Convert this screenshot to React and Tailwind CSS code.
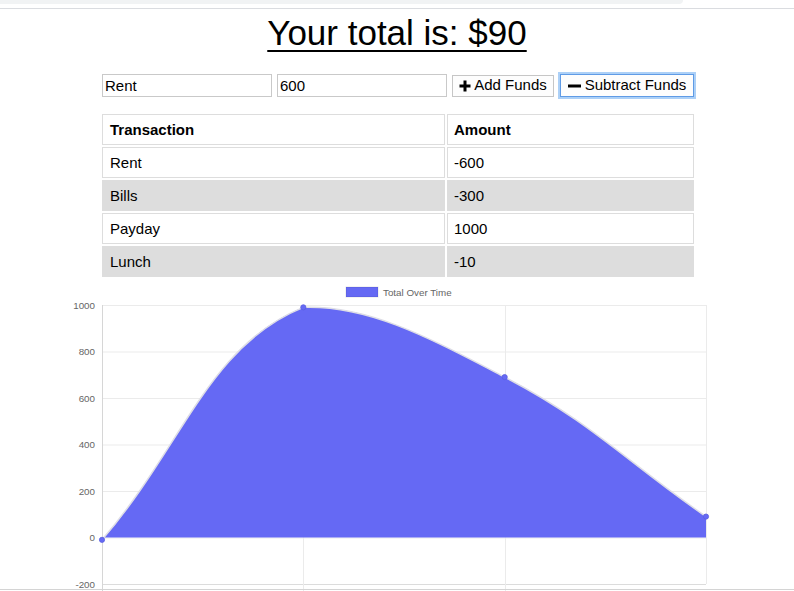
import React from "react";

const transactions = [
  { name: "Rent", amount: "-600" },
  { name: "Bills", amount: "-300" },
  { name: "Payday", amount: "1000" },
  { name: "Lunch", amount: "-10" },
];

// running total, oldest first
const totals = [-10, 990, 690, 90];
const ticks = [1000, 800, 600, 400, 200, 0, -200];

const LEFT = 102;
const RIGHT = 706;
const TOP = 305;
const BOTTOM = 584;
const yOf = (v) => 537.5 - v * 0.2325;
const clamp = (v, a, b) => Math.min(Math.max(v, a), b);

const pts = totals.map((v, i) => [LEFT + (i * (RIGHT - LEFT)) / 3, yOf(v)]);

// same spline chart.js uses (tension 0.4)
const controls = (i) => {
  const prev = pts[Math.max(i - 1, 0)];
  const cur = pts[i];
  const next = pts[Math.min(i + 1, pts.length - 1)];
  const d01 = Math.hypot(cur[0] - prev[0], cur[1] - prev[1]);
  const d12 = Math.hypot(next[0] - cur[0], next[1] - cur[1]);
  const s01 = d01 / (d01 + d12) || 0;
  const s12 = d12 / (d01 + d12) || 0;
  const fa = 0.4 * s01;
  const fb = 0.4 * s12;
  const dx = next[0] - prev[0];
  const dy = next[1] - prev[1];
  return {
    prev: [clamp(cur[0] - fa * dx, LEFT, RIGHT), clamp(cur[1] - fa * dy, TOP, BOTTOM)],
    next: [clamp(cur[0] + fb * dx, LEFT, RIGHT), clamp(cur[1] + fb * dy, TOP, BOTTOM)],
  };
};

let line = `M${pts[0][0]},${pts[0][1]}`;
for (let i = 1; i < pts.length; i++) {
  const a = controls(i - 1).next;
  const b = controls(i).prev;
  line += ` C${a[0]},${a[1]} ${b[0]},${b[1]} ${pts[i][0]},${pts[i][1]}`;
}
const area = `${line} L${RIGHT},${yOf(0)} L${LEFT},${yOf(0)} Z`;

function Plus() {
  return (
    <svg width="12" height="12" viewBox="0 0 12 12">
      <path d="M6 0.5v11M0.5 6h11" stroke="#000" strokeWidth="3" />
    </svg>
  );
}

function Minus() {
  return (
    <svg width="13" height="12" viewBox="0 0 13 12">
      <path d="M0 6h13" stroke="#000" strokeWidth="3" />
    </svg>
  );
}

function Chart() {
  const xs = [LEFT, 303, 505, RIGHT];
  return (
    <svg width="794" height="311" viewBox="0 280 794 311" className="block">
      {/* legend */}
      <rect x="346" y="287" width="32" height="10" fill="#6569f4" stroke="rgba(0,0,0,0.1)" />
      <text x="383" y="295.5" fontSize="9.8" fill="#666" fontFamily="Liberation Sans, Arial, sans-serif">
        Total Over Time
      </text>

      {/* grid */}
      {ticks.map((t) => (
        <g key={t}>
          <line x1={LEFT} x2={RIGHT} y1={yOf(t) + 0.5} y2={yOf(t) + 0.5} stroke={t === -200 ? "#dcdcdc" : "#ebebeb"} />
          <text
            x="95"
            y={yOf(t) + 3.8}
            fontSize="9.8"
            fill="#666"
            textAnchor="end"
            fontFamily="Liberation Sans, Arial, sans-serif"
          >
            {t}
          </text>
        </g>
      ))}
      {xs.map((x, i) => (
        <line
          key={x}
          x1={x + 0.5}
          x2={x + 0.5}
          y1={TOP}
          y2={i === 3 ? BOTTOM : 591}
          stroke={i === 0 ? "#d6d6d6" : "#ebebeb"}
        />
      ))}

      {/* data */}
      <path d={area} fill="#6569f4" />
      <path d={line} fill="none" stroke="#dedee6" strokeWidth="1.5" />
      {pts.map((p, i) => (
        <circle key={i} cx={p[0]} cy={p[1]} r="2.6" fill="#6569f4" stroke="#5a5ee0" strokeWidth="0.8" />
      ))}

      <line x1="0" x2="794" y1="589.5" y2="589.5" stroke="#d4d4d4" />
    </svg>
  );
}

export default function App() {
  return (
    <div className="w-[794px] h-[591px] overflow-hidden bg-white text-black font-['Liberation_Sans',Arial,sans-serif]">
      {/* browser strip */}
      <div className="h-[4px] w-[683px] bg-[#f1f3f4] rounded-br-[8px]" />
      <div className="mt-[4px] h-px bg-[#dadce0]" />

      <h1 className="mt-[4px] text-center text-[35px] leading-[39px] underline decoration-[2px] underline-offset-[5px]">
        Your total is: $90
      </h1>

      <div className="ml-[100px] w-[596px]">
        <div className="mt-[22px] pl-[2px] flex items-center h-[23px] text-[15px]">
          <input
            defaultValue="Rent"
            className="w-[170px] h-[23px] border border-[#c9c9c9] px-[2px] outline-none"
          />
          <input
            defaultValue="600"
            className="ml-[5px] w-[170px] h-[23px] border border-[#c9c9c9] px-[2px] outline-none"
          />
          <button className="ml-[5px] w-[102px] h-[22px] border border-[#c6c6c6] bg-[#fdfdfd] flex items-center justify-center gap-[3px]">
            <Plus />
            <span>Add Funds</span>
          </button>
          <button className="ml-[6px] w-[134px] h-[23px] border border-[#5f9be6] bg-[#fdfdfd] shadow-[0_0_0_2px_#acd0f7] flex items-center justify-center gap-[4px]">
            <Minus />
            <span>Subtract Funds</span>
          </button>
        </div>

        <table className="mt-[15px] w-[596px] border-separate border-spacing-[2px] text-[15px] leading-[17px]">
          <thead>
            <tr>
              <th className="w-[343px] border border-[#dddddd] px-[7px] py-[6px] text-left font-bold">Transaction</th>
              <th className="border border-[#dddddd] px-[6px] py-[6px] text-left font-bold">Amount</th>
            </tr>
          </thead>
          <tbody>
            {transactions.map((t, i) => (
              <tr key={t.name} className={i % 2 === 1 ? "bg-[#dddddd]" : "bg-white"}>
                <td className="border border-[#dddddd] px-[7px] py-[6px]">{t.name}</td>
                <td className="border border-[#dddddd] px-[6px] py-[6px]">{t.amount}</td>
              </tr>
            ))}
          </tbody>
        </table>
      </div>

      <div className="mt-[1px]">
        <Chart />
      </div>
    </div>
  );
}
